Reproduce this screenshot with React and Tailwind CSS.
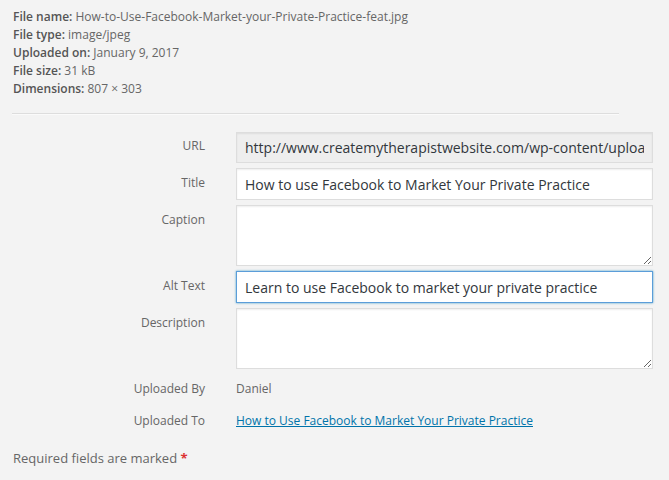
import React from "react";

const font = { fontFamily: '"Open Sans", "Noto Sans", sans-serif' };

function Label({ children, pt = "pt-[6px]" }) {
  return (
    <div className={`w-[193px] shrink-0 text-right text-[12px] leading-[18px] text-[#666] ${pt}`}>
      {children}
    </div>
  );
}

export default function App() {
  const inputBase =
    "w-[417px] border border-[#ddd] px-[8px] text-[14px] text-[#32373c] outline-none shadow-[inset_0_1px_2px_rgba(0,0,0,0.07)]";
  return (
    <div className="w-[669px] h-[480px] bg-[#f3f3f3] overflow-hidden" style={font}>
      <div className="pl-[13px] pt-[8px] text-[12px] leading-[18px] text-[#666]">
        <div><b className="font-semibold text-[#555]">File name:</b> How-to-Use-Facebook-Market-your-Private-Practice-feat.jpg</div>
        <div><b className="font-semibold text-[#555]">File type:</b> image/jpeg</div>
        <div><b className="font-semibold text-[#555]">Uploaded on:</b> January 9, 2017</div>
        <div><b className="font-semibold text-[#555]">File size:</b> 31 kB</div>
        <div><b className="font-semibold text-[#555]">Dimensions:</b> 807 × 303</div>
      </div>
      <div className="ml-[12px] mt-[15px] w-[607px] h-[2px] border-t border-[#ddd] border-b border-b-[#fafafa]" />
      <div className="pl-[12px] mt-[17px] flex flex-col">
        <div className="flex gap-[31px]">
          <Label pt="pt-[5px]">URL</Label>
          <input
            readOnly
            value="http://www.createmytherapistwebsite.com/wp-content/uploads/2017/01/How-to-Use-Facebook-Market-your-Private-Practice-feat.jpg"
            className={`${inputBase} h-[31px] bg-[#eee]`}
          />
        </div>
        <div className="flex gap-[31px] mt-[5px]">
          <Label>Title</Label>
          <input
            readOnly
            value="How to use Facebook to Market Your Private Practice"
            className={`${inputBase} h-[32px] bg-white`}
          />
        </div>
        <div className="flex gap-[31px] mt-[5px]">
          <Label>Caption</Label>
          <textarea readOnly className={`${inputBase} h-[61px] bg-white resize-y block`} />
        </div>
        <div className="flex gap-[31px] mt-[5px]">
          <Label>Alt Text</Label>
          <input
            readOnly
            value="Learn to use Facebook to market your private practice"
            className="w-[417px] h-[32px] border border-[#5b9dd9] px-[8px] text-[14px] text-[#32373c] bg-white outline-none shadow-[0_0_2px_rgba(30,140,190,0.8)]"
          />
        </div>
        <div className="flex gap-[31px] mt-[5px]">
          <Label>Description</Label>
          <textarea readOnly className={`${inputBase} h-[61px] bg-white resize-y block`} />
        </div>
        <div className="flex gap-[31px] mt-[11px]">
          <Label pt="pt-0">Uploaded By</Label>
          <div className="text-[12px] leading-[18px] text-[#666]">Daniel</div>
        </div>
        <div className="flex gap-[31px] mt-[14px]">
          <Label pt="pt-0">Uploaded To</Label>
          <a href="#" className="text-[12px] leading-[18px] text-[#0073aa] underline">
            How to Use Facebook to Market Your Private Practice
          </a>
        </div>
        <div className="mt-[19px] pl-[1px] text-[13px] leading-[18px] text-[#666]">
          Required fields are marked <span className="font-bold text-[#dc3232]">*</span>
        </div>
      </div>
    </div>
  );
}
